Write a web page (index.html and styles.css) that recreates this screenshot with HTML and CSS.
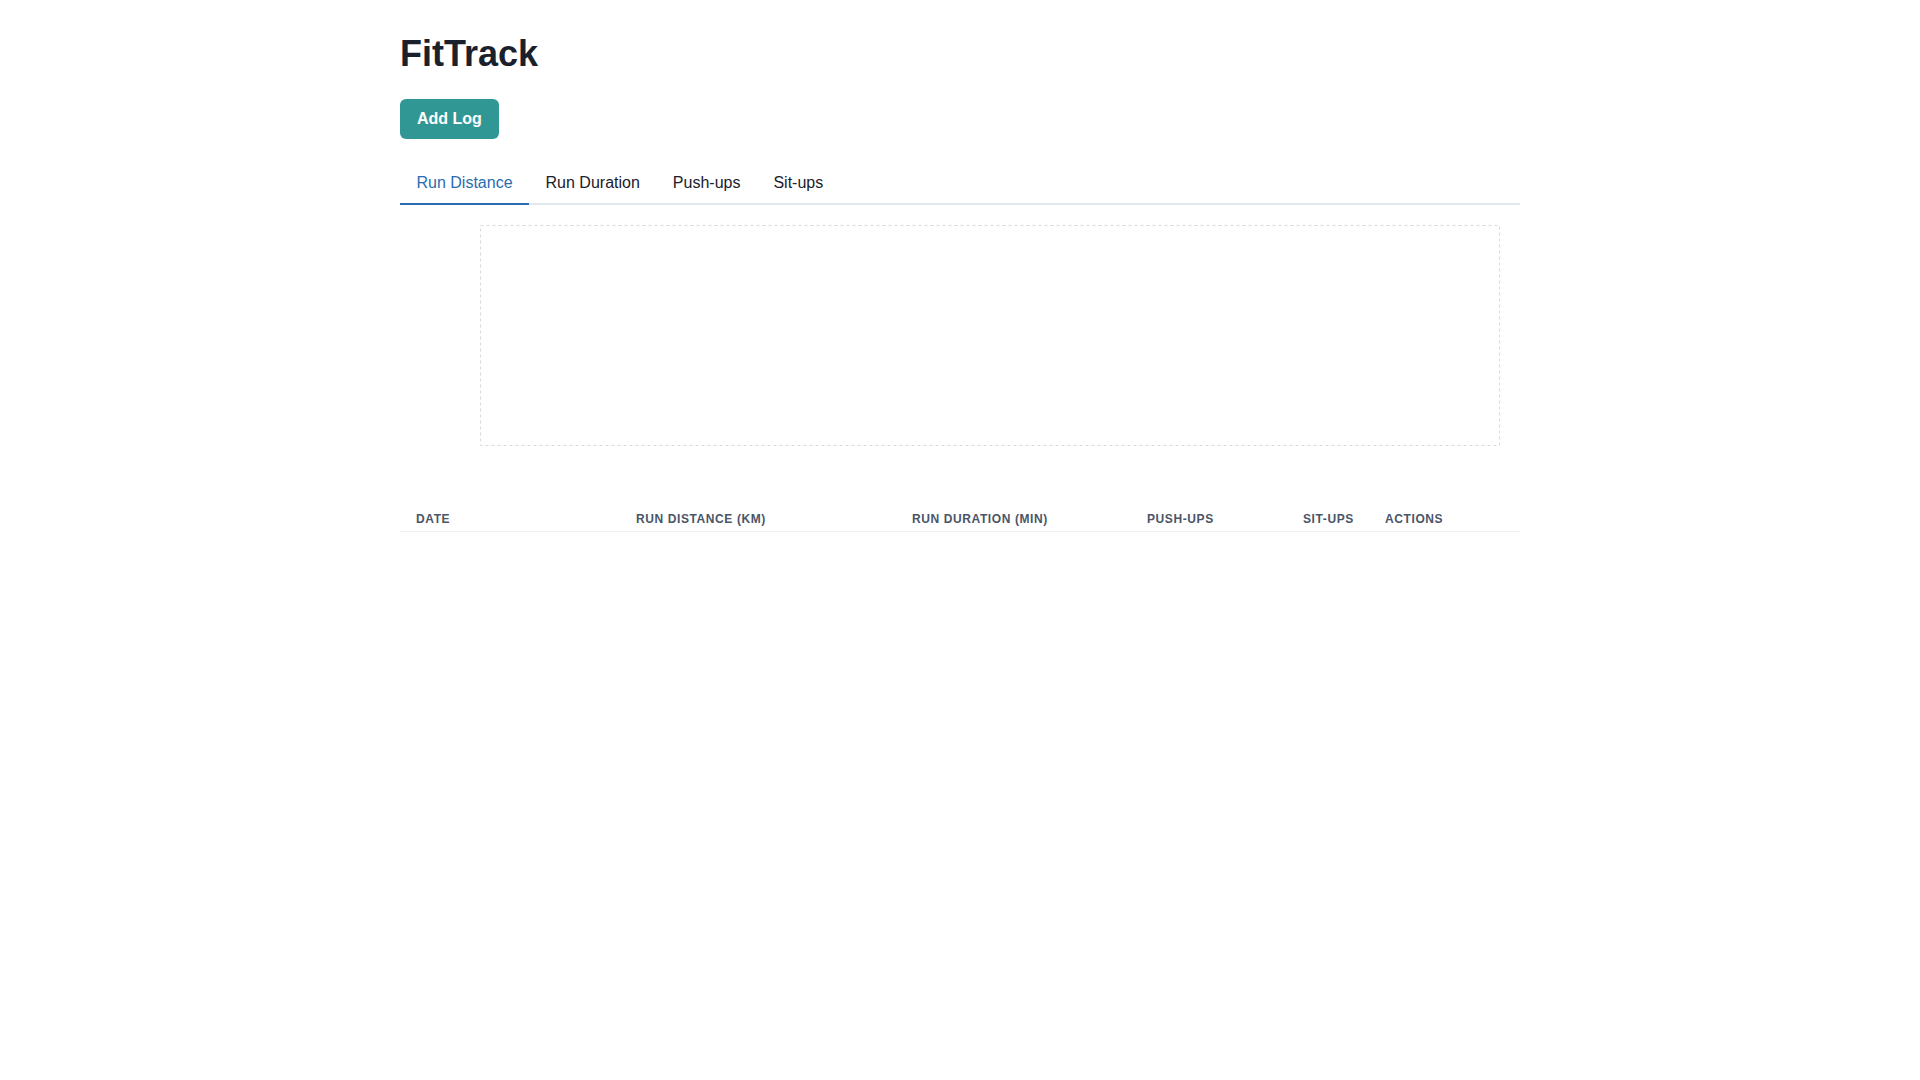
FILE: index.html
```html
<!DOCTYPE html>
<html lang="en">
<head>
    <meta charset="UTF-8">
    <meta name="viewport" content="width=device-width, initial-scale=1.0">
    <title>FitTrack</title>
    <link rel="stylesheet" href="styles.css">
</head>
<body>
    <div class="container">
        <h1>FitTrack</h1>
        <button class="add-btn">Add Log</button>

        <div class="tabs">
            <div class="tab-list">
                <button class="tab active">Run Distance</button>
                <button class="tab">Run Duration</button>
                <button class="tab">Push-ups</button>
                <button class="tab">Sit-ups</button>
            </div>
            <div class="tab-panel">
                <div class="chart">
                    <svg class="plot" width="100%" height="100%">
                        <rect x="0.5" y="0.5"></rect>
                    </svg>
                </div>
            </div>
        </div>

        <table class="log-table">
            <thead>
                <tr>
                    <th class="col-date">Date</th>
                    <th class="col-dist">Run Distance (km)</th>
                    <th class="col-dur">Run Duration (min)</th>
                    <th class="col-push">Push-ups</th>
                    <th class="col-sit">Sit-ups</th>
                    <th class="col-act">Actions</th>
                </tr>
            </thead>
            <tbody></tbody>
        </table>
    </div>
</body>
</html>
```

FILE: styles.css
```css
* {
    box-sizing: border-box;
}
body {
    margin: 0;
    font-family: "Liberation Sans", Arial, sans-serif;
    color: #1a202c;
    background: #fff;
}
.container {
    max-width: 1152px;
    margin: 0 auto;
    padding: 32px 16px;
}
h1 {
    margin: 0 0 24px;
    font-size: 36px;
    line-height: 1.2;
    font-weight: bold;
    color: #1a202c;
}
.add-btn {
    display: block;
    height: 40px;
    padding: 0 17px;
    border: none;
    border-radius: 6px;
    background: #319795;
    color: #fff;
    font-family: inherit;
    font-size: 16px;
    font-weight: bold;
    cursor: pointer;
    margin-bottom: 24px;
}
.add-btn:hover {
    background: #2c7a7b;
}
.tab-list {
    display: flex;
    border-bottom: 2px solid #e2e8f0;
}
.tab {
    padding: 8px 16.5px;
    margin-bottom: -2px;
    border: none;
    border-bottom: 2px solid transparent;
    background: none;
    font-family: inherit;
    font-size: 16px;
    line-height: 24px;
    color: #1a202c;
    cursor: pointer;
}
.tab.active {
    color: #2b6cb0;
    border-bottom-color: #2b6cb0;
}
.tab-panel {
    padding: 16px 0;
}
.chart {
    height: 250px;
    padding: 4px 20px 25px 80px;
}
.plot {
    display: block;
}
.plot rect {
    width: calc(100% - 1px);
    height: calc(100% - 1px);
    fill: none;
    stroke: #d9d9d9;
    stroke-dasharray: 3 3;
}
.log-table {
    width: 100%;
    margin-top: 20px;
    border-collapse: collapse;
    table-layout: fixed;
}
.log-table th {
    padding: 4px 16px;
    text-align: left;
    font-size: 12px;
    line-height: 16px;
    font-weight: bold;
    text-transform: uppercase;
    letter-spacing: 0.05em;
    white-space: nowrap;
    color: #4a5568;
    border-bottom: 1px solid #edf2f7;
}
.col-date { width: 220px; }
.col-dist { width: 276px; }
.col-dur { width: 235px; }
.col-push { width: 156px; }
.col-sit { width: 82px; }
.col-act { width: 151px; }
```
